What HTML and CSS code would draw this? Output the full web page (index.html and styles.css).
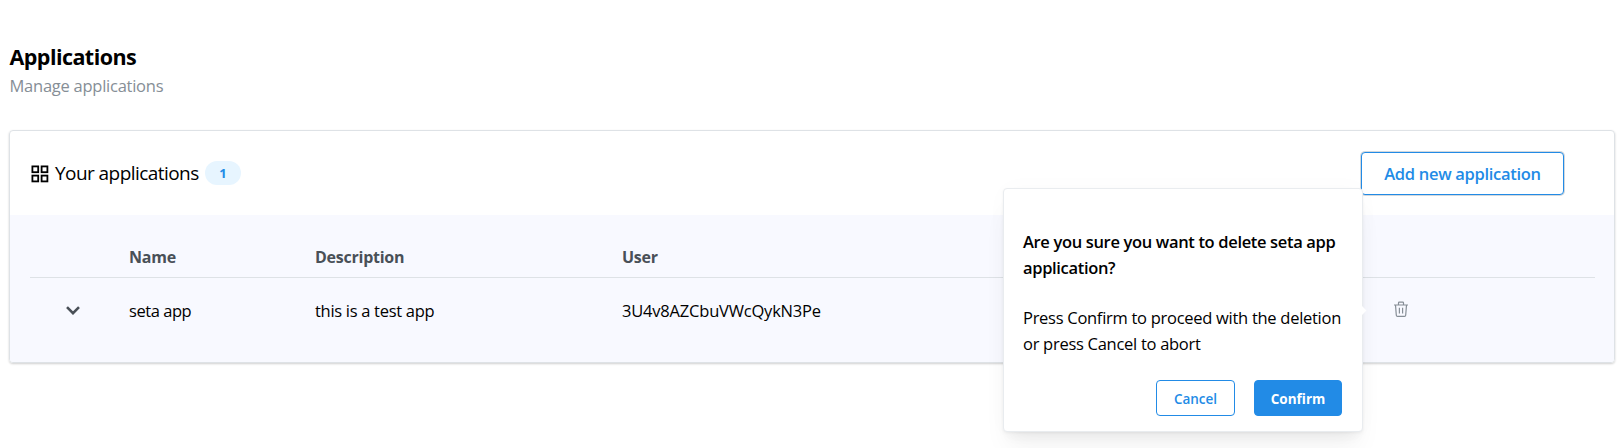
FILE: index.html
```html
<!DOCTYPE html>
<html lang="en">
<head>
<meta charset="utf-8">
<title>Applications</title>
<link rel="stylesheet" href="styles.css">
</head>
<body>
<main class="page">
  <h1 class="title">Applications</h1>
  <p class="subtitle">Manage applications</p>
  <section class="card">
    <header class="card-head">
      <svg class="grid-icon" viewBox="0 0 18 18" fill="none" stroke="#000" stroke-width="1.8"><rect x="1.4" y="1.4" width="5.8" height="5.8"/><rect x="10.6" y="1.4" width="5.8" height="5.8"/><rect x="1.4" y="10.6" width="5.8" height="5.8"/><rect x="10.6" y="10.6" width="5.8" height="5.8"/></svg>
      <h2 class="card-title">Your applications</h2>
      <span class="badge">1</span>
      <button class="btn add">Add new application</button>
    </header>
    <div class="table">
      <div class="row head">
        <span></span><span>Name</span><span>Description</span><span>User</span><span></span>
      </div>
      <div class="row">
        <svg class="chevron" viewBox="0 0 14 9" fill="none" stroke="#495057" stroke-width="2.6"><path d="M1 1.2 7 7.2 13 1.2"/></svg>
        <span class="v-name">seta app</span><span class="v-desc">this is a test app</span><span class="v-user">3U4v8AZCbuVWcQykN3Pe</span>
        <svg class="trash" viewBox="0 0 14 16" fill="none" stroke="#868e96" stroke-width="1.2"><path d="M0 4H14M4.5 4V1.9Q4.5 1.1 5.3 1.1H8.7Q9.5 1.1 9.5 1.9V4M1.5 4 2.3 14.2Q2.4 15.3 3.5 15.3H10.5Q11.6 15.3 11.7 14.2L12.5 4M5.4 6.7V12.5M8.6 6.7V12.5"/></svg>
      </div>
    </div>
  </section>
</main>
<div class="popover" role="dialog">
  <p class="ask">Are you sure you want to delete seta app<br>application?</p>
  <p class="info">Press Confirm to proceed with the deletion<br>or press Cancel to abort</p>
  <div class="actions"><button class="btn cancel">Cancel</button><button class="btn confirm">Confirm</button></div>
  <i class="arrow"></i>
</div>
</body>
</html>
```
FILE: styles.css
```css
* { box-sizing: border-box; }
body { margin: 0; height: 448px; overflow: hidden; position: relative; background: #fff; color: #000; font: 16.5px/26px "Open Sans", "Noto Sans", sans-serif; }
h1, h2, p { margin: 0; }
.page { padding: 42px 9px 0; }
.title { padding-left: .5px; font-size: 21.5px; line-height: 30px; font-weight: 700; letter-spacing: -.55px; }
.subtitle { padding-left: .5px; line-height: 28px; color: #868e96; letter-spacing: -.25px; }
.card { margin-top: 30px; height: 233px; border: 1px solid #dee2e6; border-radius: 4px; overflow: hidden; box-shadow: 0 1px 3px rgba(0,0,0,.07), 0 1px 2px rgba(0,0,0,.12); }
.card-head { height: 84px; padding: 0 50px 0 20.5px; display: flex; align-items: center; }
.grid-icon { width: 18px; height: 18px; margin-top: 1px; }
.card-title { margin-left: 6.5px; font-size: 19px; font-weight: 400; letter-spacing: -.56px; white-space: nowrap; width: 150px; }
.badge { width: 36px; height: 24px; border-radius: 12px; background: #e7f5ff; color: #228be6; font-size: 13px; line-height: 25px; font-weight: 700; text-align: center; }
.btn { display: flex; align-items: center; justify-content: center; font-family: inherit; border: 1px solid #228be6; border-radius: 4px; background: #fff; color: #228be6; padding: 0; font-weight: 600; white-space: nowrap; }
.add { margin-left: auto; width: 203px; height: 43px; font-size: 16.5px; letter-spacing: -.3px; box-shadow: 0 0 0 1px rgba(34,60,80,.2); }
.table { height: 147px; padding: 21px 19px 0 20px; background: #f8f9ff; }
.row { display: grid; grid-template-columns: 99px 186px 307px 767px 1fr; align-items: center; height: 66px; white-space: nowrap; }
.head { height: 42px; border-bottom: 1px solid #dee2e6; font-weight: 700; font-size: 16px; color: #495057; letter-spacing: -.25px; }
.v-name { letter-spacing: -.45px; }
.v-desc { letter-spacing: -.3px; }
.v-user { letter-spacing: -.2px; }
.chevron { width: 14px; height: 9px; margin: -2px 0 0 36px; }
.trash { width: 14px; height: 16px; margin-left: 4.5px; margin-top: -5px; }
.popover { position: absolute; left: 1003px; top: 188px; width: 360px; height: 244px; padding: 40px 20px 0 19px; background: #fff; border: 1px solid #e9ecef; border-radius: 4px; box-shadow: 0 1px 3px rgba(0,0,0,.05), 0 20px 25px -5px rgba(0,0,0,.05), 0 10px 10px -5px rgba(0,0,0,.04), 0 0 24px rgba(0,0,0,.02); white-space: nowrap; }
.ask { font-weight: 600; letter-spacing: -.34px; }
.info { margin-top: 24px; letter-spacing: -.28px; }
.actions { display: flex; justify-content: flex-end; gap: 19px; margin-top: 23px; }
.actions .btn { height: 36px; padding-top: 1px; font-size: 13.5px; }
.cancel { width: 79px; }
.actions .confirm { width: 88px; background: #228be6; color: #fff; font-weight: 700; }
.arrow { position: absolute; right: -3px; top: 118px; width: 7px; height: 7px; background: #fff; transform: rotate(45deg); }
```
